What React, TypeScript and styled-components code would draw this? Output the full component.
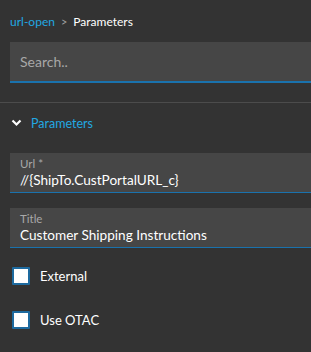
import styled, { createGlobalStyle } from "styled-components";

const GlobalStyle = createGlobalStyle`
  html, body {
    margin: 0;
    padding: 0;
    background: #333333;
  }
  body {
    font-family: Lato, "Noto Sans", sans-serif;
    color: #ffffff;
  }
`;

const Panel = styled.div`
  width: 311px;
  height: 352px;
  overflow: hidden;
  background: #333333;
  display: flex;
  flex-direction: column;
`;

const Breadcrumb = styled.div`
  display: flex;
  align-items: center;
  gap: 6px;
  height: 42px;
  padding-left: 10px;
  font-size: 12px;
`;

const Crumb = styled.span<{ $active?: boolean }>`
  color: ${(p) => (p.$active ? "#ffffff" : "#22a8e2")};
`;

const Sep = styled.span`
  color: #a0a0a0;
  font-size: 11px;
`;

const SearchBox = styled.div`
  margin-left: 10px;
  height: 39px;
  background: #464646;
  border-bottom: 2px solid #1a72ad;
  display: flex;
  align-items: center;
  padding-left: 10px;
  font-size: 14px;
  color: #a8a8a8;
`;

const Divider = styled.div`
  margin-top: 19px;
  height: 1px;
  background: #4c4c4c;
`;

const SectionHeader = styled.div`
  display: flex;
  align-items: center;
  gap: 9px;
  height: 40px;
  padding-left: 11px;
  font-size: 12.5px;
  color: #22a8e2;
`;

const Fields = styled.div`
  display: flex;
  flex-direction: column;
  gap: 15px;
  padding-left: 10px;
  margin-top: 10px;
`;

const Field = styled.div`
  height: 39px;
  background: #464646;
  border-bottom: 1px solid #1a72ad;
  padding-left: 10px;
  display: flex;
  flex-direction: column;
  justify-content: center;
`;

const Label = styled.div`
  font-size: 11.5px;
  color: #a8a8a8;
  line-height: 14px;
`;

const Value = styled.div`
  font-size: 13.6px;
  color: #ffffff;
  line-height: 18px;
`;

const Checks = styled.div`
  display: flex;
  flex-direction: column;
  gap: 26px;
  padding-left: 12px;
  margin-top: 19px;
`;

const CheckRow = styled.label`
  display: flex;
  align-items: center;
  gap: 10px;
  font-size: 13px;
  color: #ffffff;
`;

const Box = styled.span`
  width: 14px;
  height: 14px;
  background: #ffffff;
  border: 2px solid #1d6a9f;
  border-radius: 1px;
`;

export default function App() {
  return (
    <Panel>
      <GlobalStyle />
      <Breadcrumb>
        <Crumb>url-open</Crumb>
        <Sep>&gt;</Sep>
        <Crumb $active>Parameters</Crumb>
      </Breadcrumb>
      <SearchBox>Search..</SearchBox>
      <Divider />
      <SectionHeader>
        <svg width="11" height="8" viewBox="0 0 11 8">
          <path d="M1.5 1.5 L5.5 5.5 L9.5 1.5" fill="none" stroke="#ffffff" strokeWidth="2.2" />
        </svg>
        Parameters
      </SectionHeader>
      <Fields>
        <Field>
          <Label>Url *</Label>
          <Value>//{"{ShipTo.CustPortalURL_c}"}</Value>
        </Field>
        <Field>
          <Label>Title</Label>
          <Value>Customer Shipping Instructions</Value>
        </Field>
      </Fields>
      <Checks>
        <CheckRow>
          <Box />
          External
        </CheckRow>
        <CheckRow>
          <Box />
          Use OTAC
        </CheckRow>
      </Checks>
    </Panel>
  );
}
